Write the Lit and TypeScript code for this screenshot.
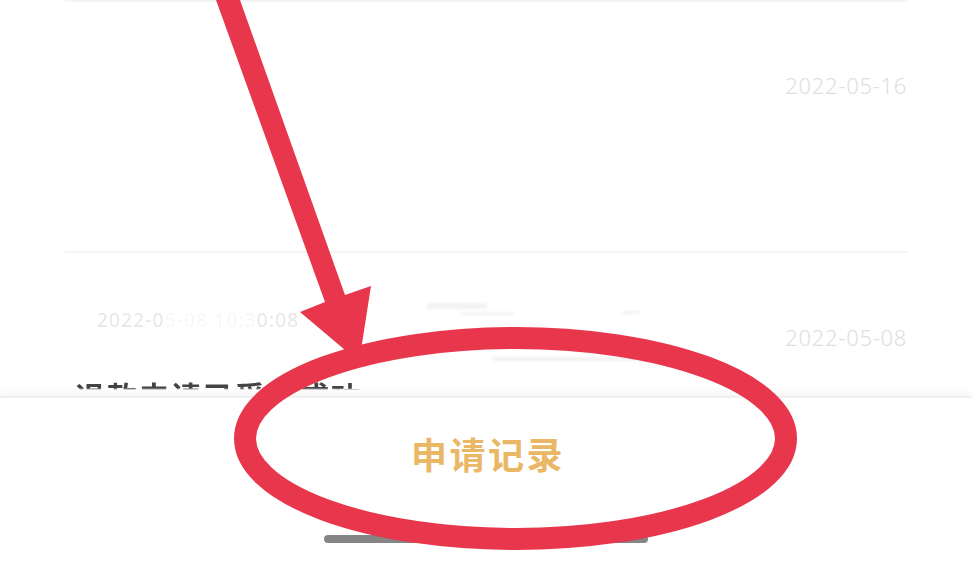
import { LitElement, html, css } from "lit";
import { customElement } from "lit/decorators.js";

const SMUDGES = [
  { x: 427, y: 303, w: 60, h: 6 },
  { x: 460, y: 312, w: 54, h: 3 },
  { x: 622, y: 311, w: 18, h: 3 },
  { x: 492, y: 357, w: 190, h: 4 },
];

@customElement("app-root")
export class AppRoot extends LitElement {
  static styles = css`
    :host {
      display: block;
      position: relative;
      width: 972px;
      height: 562px;
      overflow: hidden;
      background: #fff;
      font-family: "Noto Sans", "Noto Sans CJK SC", sans-serif;
    }
    .page {
      display: flex;
      flex-direction: column;
      height: 100%;
    }
    .list {
      flex: 1;
      min-height: 0;
      overflow: hidden;
      padding: 0 65px;
    }
    .row {
      box-sizing: border-box;
      height: 251px;
      border-top: 2px solid #f4f4f4;
      padding-top: 66px;
      display: flex;
      flex-direction: column;
    }
    .date {
      align-self: flex-end;
      font-size: 22px;
      line-height: 34px;
      color: #dedede;
      font-weight: 300;
      letter-spacing: 0.7px;
    }
    .row.second {
      padding-top: 58px;
      height: 200px;
    }
    .row.second .date {
      margin-top: -9px;
    }
    .faint {
      margin-left: 32px;
      height: 18px;
      font-size: 19px;
      line-height: 18px;
      letter-spacing: 1.2px;
      color: #e6e6e6;
      filter: blur(0.7px);
      white-space: nowrap;
    }
    .faint .gone {
      color: #f7f7f7;
    }
    .title {
      margin: 23px 0 0 10px;
      height: 14px;
      overflow: hidden;
      font-size: 30px;
      line-height: 40px;
      font-weight: 700;
      color: #444;
      letter-spacing: 2px;
      white-space: nowrap;
      filter: blur(0.5px);
      -webkit-mask-image: linear-gradient(#000 0, #000 11px, transparent 13px);
      mask-image: linear-gradient(#000 0, #000 11px, transparent 13px);
    }
    .footer {
      flex: none;
      box-sizing: border-box;
      position: relative;
      height: 166px;
      background: #fff;
      border-top: 2px solid #f0f0f0;
      box-shadow: 0 -5px 6px rgba(0, 0, 0, 0.03);
      display: flex;
      flex-direction: column;
      align-items: center;
    }
    .action {
      margin: 33px 0 0 4px;
      font-family: "Noto Sans CJK SC", sans-serif;
      font-size: 36px;
      line-height: 44px;
      font-weight: 700;
      letter-spacing: 2.5px;
      color: #e9b765;
    }
    .home {
      margin-top: 60px;
      width: 324px;
      height: 8px;
      border-radius: 4px;
      background: #858585;
    }
    .smudge {
      position: absolute;
      background: #f3f3f3;
      border-radius: 2px;
      filter: blur(1px);
    }
    .mark {
      position: absolute;
      inset: 0;
      width: 972px;
      height: 562px;
      pointer-events: none;
    }
  `;

  render() {
    return html`
      <div class="page">
        <div class="list">
          <div class="row">
            <div class="date">2022-05-16</div>
          </div>
          <div class="row second">
            <div class="faint">2022-0<span class="gone">5-08 10:3</span>0:08</div>
            <div class="date">2022-05-08</div>
            <div class="title">退款申请已受理成功</div>
          </div>
        </div>
        <div class="footer">
          <div class="action">申请记录</div>
          <div class="home"></div>
        </div>
      </div>
      ${SMUDGES.map(
        (s) =>
          html`<div
            class="smudge"
            style="left:${s.x}px;top:${s.y}px;width:${s.w}px;height:${s.h}px"
          ></div>`
      )}
      <svg class="mark" viewBox="0 0 972 562" aria-hidden="true">
        <polygon
          fill="#e8364c"
          points="216,0 240,0 345,295 371,286 361,350 345,350 300,312 325,302"
        ></polygon>
        <ellipse
          cx="515.5"
          cy="438.5"
          rx="270.5"
          ry="100.5"
          fill="none"
          stroke="#e8364c"
          stroke-width="22"
        ></ellipse>
      </svg>
    `;
  }
}
